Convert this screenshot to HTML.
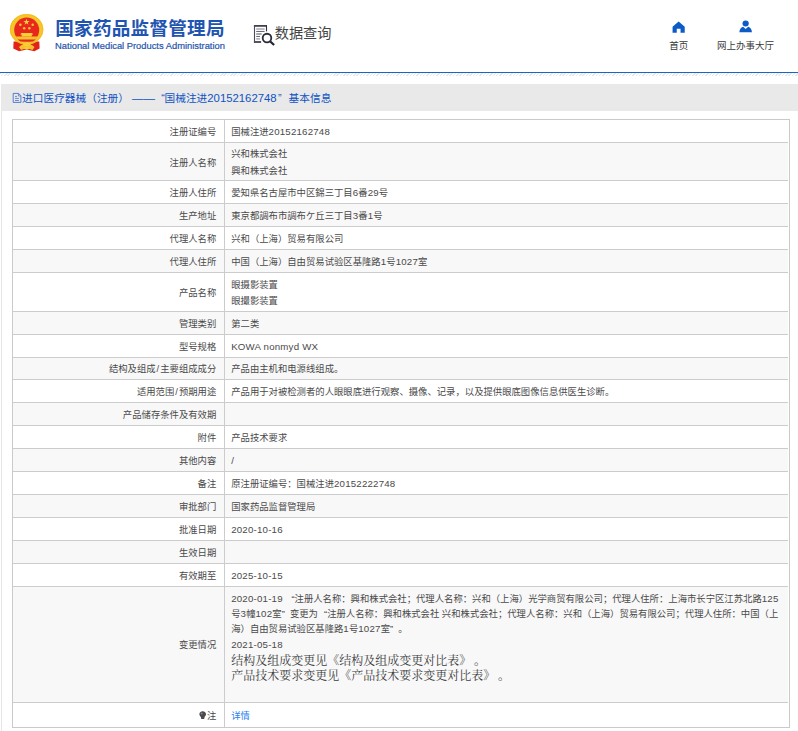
<!DOCTYPE html>
<html lang="zh-CN">
<head>
<meta charset="utf-8">
<title>国家药品监督管理局 数据查询</title>
<style>
html,body{margin:0;padding:0;background:#fff;}
body{width:798px;height:731px;overflow:hidden;position:relative;
  font-family:"Liberation Sans","Noto Sans CJK SC",sans-serif;color:#4a4a4a;text-spacing-trim:space-all;}
#hdr{position:absolute;left:0;top:0;width:798px;height:72px;background:#fff;}
#emblem{position:absolute;left:8px;top:12px;width:38px;height:41px;}
#ttl{position:absolute;left:55.2px;top:14.5px;font-size:18.6px;font-weight:bold;color:#1f55b0;
  white-space:nowrap;line-height:28px;letter-spacing:0.25px;}
#ttl2{position:absolute;left:55.1px;top:40.4px;font-size:9.36px;color:#2555ad;white-space:nowrap;line-height:12px;-webkit-text-stroke:0.2px #2555ad;}
#sico{position:absolute;left:250px;top:20px;width:30px;height:30px;}
#stx{position:absolute;left:274.7px;top:23.1px;font-size:14.2px;color:#444;white-space:nowrap;line-height:20px;}
.nav{position:absolute;top:40px;font-size:9.5px;color:#3a3a3a;white-space:nowrap;line-height:12px;text-align:center;}
.nico{position:absolute;}
#bl{position:absolute;left:0;top:71.9px;width:798px;height:1.3px;background:#1467c8;}
#hatch{position:absolute;left:0;top:73.4px;width:798px;height:3px;
  background:repeating-linear-gradient(135deg,#e4e4e4 0,#e4e4e4 1px,#fff 1px,#fff 2.35px);opacity:.85;}
#box{position:absolute;left:0.8px;top:83.8px;width:900px;height:700px;border-left:1px solid #e6e6e6;}
#bar{position:absolute;left:1px;top:83.8px;width:800px;height:27px;background:#e9e9e9;}
#bartx{position:absolute;left:22.1px;top:89.2px;font-size:10.7px;color:#0f52c4;white-space:nowrap;line-height:18px;}
#bartx .d{font-size:11.33px;}
#bartx .ds{font-size:11.5px;}
.blq{padding-left:6.3px;margin-right:-0.3px}
.brq{padding-left:1.5px;padding-right:6.95px;}
#bico{position:absolute;left:12px;top:92px;width:10px;height:12px;}
.lq{padding-left:.65em;}
.rq{padding-right:.55em;}
table{position:absolute;left:11.8px;top:118.7px;width:778.2px;border:1px solid #cacaca;
  border-collapse:separate;border-spacing:0;padding:0 0.8px 0 0;table-layout:fixed;font-size:9.35px;line-height:15.34px;}
td{padding:3px 0 0 0;box-sizing:border-box;vertical-align:middle;border-bottom:1px solid #cccccc;white-space:nowrap;overflow:hidden;}
td.l{width:212.1px;text-align:right;padding-right:7.6px;border-right:1px solid #cccccc;}
td.v{padding-left:6.3px;text-align:left;}
tr.s td{height:23px;}
tr.d td{height:38px;line-height:16.2px;}
tr.b td{height:116px;}
tr.g td{background:#f8f8f8;}
tr.last td{border-bottom:0;height:24px;}
.n{font-size:9.7px;letter-spacing:0.2px;line-height:0;position:relative;top:0px;}
td.big{vertical-align:top;padding-top:5px;}
td.big div{height:15.34px;line-height:15.34px;}
td.big div.sf{font-family:"Liberation Serif","Noto Serif CJK SC",serif;font-size:12px;color:#3c3c3c;height:14.8px;line-height:14.8px;position:relative;top:0.9px;}
a{color:#2a7ff0;text-decoration:none;}
.sl{padding:0 1px;}
.bulb{width:7.4px;height:8.3px;vertical-align:-0.9px;margin-right:0.3px;}
</style>
</head>
<body>
<div id="hdr">
<svg id="emblem" viewBox="0 0 38 41">
  <path d="M5.6 29.6 L5.3 36.6 L11 39.2 L18.7 37.4 L26.4 39.2 L31.6 36.6 L31.3 29.6 Z" fill="#e2231a"/>
  <ellipse cx="18.6" cy="17.4" rx="16.7" ry="15.3" fill="#f7c62b"/>
  <ellipse cx="18.6" cy="17.4" rx="16.3" ry="14.9" fill="none" stroke="#f2b91e" stroke-width="0.8"/>
  <circle cx="18.7" cy="18" r="12.5" fill="#e8281c"/>
  <path d="M7.5 24.6 H29.9 A12.5 12.5 0 0 1 24 29.4 H13.4 A12.5 12.5 0 0 1 7.5 24.6Z" fill="#f7c52b"/>
  <path d="M9.5 27.4 H27.9 L25 29.6 H12.4Z" fill="#e8281c"/>
  <path d="M13.3 21 H24.1 L25.2 22.6 H23.8 V24.6 H13.6 V22.6 H12.2Z" fill="#f8cf3a"/>
  <polygon points="18.5,6.7 19.25,8.97 21.64,8.98 19.71,10.39 20.44,12.67 18.5,11.27 16.56,12.67 17.29,10.39 15.36,8.98 17.75,8.97" fill="#f8d23c"/>
  <circle cx="12.4" cy="12.7" r="1.25" fill="#f4c534"/>
  <circle cx="24.7" cy="12.7" r="1.25" fill="#f4c534"/>
  <circle cx="16.2" cy="16.2" r="1.25" fill="#f4c534"/>
  <circle cx="21.3" cy="16.2" r="1.25" fill="#f4c534"/>
  <path d="M11 35 Q14.5 31.5 18.7 31.5 Q23 31.5 26.5 35 L24.5 38 Q18.7 35.5 13 38Z" fill="#f3c12c"/>
  <ellipse cx="18.7" cy="32.2" rx="3.6" ry="2.3" fill="#f7cc34"/>
  <ellipse cx="18.7" cy="36.3" rx="2.6" ry="1.3" fill="#f7cc34"/>
</svg>
<div id="ttl">国家药品监督管理局</div>
<div id="ttl2">National Medical Products Administration</div>
<svg id="sico" viewBox="250 20 30 30">
  <path d="M253.9 25.9 H267" stroke="#2b2b3c" stroke-width="1.6" fill="none"/>
  <path d="M253.9 42 H261.1" stroke="#2b2b3c" stroke-width="1.6" fill="none"/>
  <path d="M254.5 25.5 V42.4" stroke="#4a4a5a" stroke-width="1.1" fill="none"/>
  <path d="M266.5 25.5 V31.4" stroke="#2f2f40" stroke-width="1.1" fill="none"/>
  <path d="M256.2 29 H264.6" stroke="#9a9aa6" stroke-width="1.3"/>
  <path d="M256.2 31.45 H264.6" stroke="#3a3a4a" stroke-width="0.8"/>
  <path d="M256.2 34 H261.7" stroke="#787886" stroke-width="1.3"/>
  <path d="M256.2 36.45 H260" stroke="#3a3a4a" stroke-width="0.8"/>
  <path d="M256.2 38.9 H260" stroke="#9a9aa6" stroke-width="1.3"/>
  <circle cx="267" cy="38.05" r="4.3" fill="#fff" stroke="#2b2b3c" stroke-width="1.8"/>
  <path d="M270.3 41.5 L274.1 45" stroke="#23233a" stroke-width="2.3"/>
</svg>
<div id="stx">数据查询</div>
<svg class="nico" style="left:672.3px;top:20.6px;width:13.3px;height:12.3px" viewBox="0 0 14 13" preserveAspectRatio="none">
  <path d="M7 0.4 L13.4 6 V12.4 H9 V8.3 H5 V12.4 H0.6 V6 Z" fill="#0d5bc6"/>
</svg>
<div class="nav" style="left:669.3px;">首页</div>
<svg class="nico" style="left:739.4px;top:20.3px;width:13.3px;height:13px" viewBox="0 0 14 14" preserveAspectRatio="none">
  <circle cx="7" cy="3.8" r="3.3" fill="#0d5bc6"/>
  <path d="M0.4 13.3 Q0.6 8.6 4.3 7.4 L7 9.6 L9.7 7.4 Q13.4 8.6 13.6 13.3Z" fill="#0d5bc6"/>
</svg>
<div class="nav" style="left:717.1px;">网上办事大厅</div>
</div>
<div id="bl"></div>
<div id="hatch"></div>
<div id="box"></div>
<div id="bar"></div>
<svg id="bico" viewBox="12 92 10 12">
  <path d="M13.2 93.4 H18.6 L20.9 95.8 V102.4 H13.2Z" fill="none" stroke="#3a68cc" stroke-width="0.85"/>
  <path d="M18.4 93.6 V96 H20.7" fill="none" stroke="#3a68cc" stroke-width="0.7"/>
  <path d="M15 96.4 H17 M15 98.4 H18.9 M15 100.5 H18.9" stroke="#3a68cc" stroke-width="0.75"/>
</svg>
<div id="bartx">进口医疗器械（注册） <span class="ds">——</span><span class="blq">“</span>国械注进<span class="d">20152162748</span><span class="brq">”</span>基本信息</div>
<table>
<tr class="s"><td class="l">注册证编号</td><td class="v">国械注进<span class="n">20152162748</span></td></tr>
<tr class="d g"><td class="l">注册人名称</td><td class="v">兴和株式会社<br>興和株式会社</td></tr>
<tr class="s"><td class="l">注册人住所</td><td class="v">愛知県名古屋市中区錦三丁目<span class="n">6</span>番<span class="n">29</span>号</td></tr>
<tr class="s g"><td class="l">生产地址</td><td class="v">東京都調布市調布ケ丘三丁目<span class="n">3</span>番<span class="n">1</span>号</td></tr>
<tr class="s"><td class="l">代理人名称</td><td class="v">兴和（上海）贸易有限公司</td></tr>
<tr class="s g"><td class="l">代理人住所</td><td class="v">中国（上海）自由贸易试验区基隆路<span class="n">1</span>号<span class="n">1027</span>室</td></tr>
<tr class="d"><td class="l" style="height:39px">产品名称</td><td class="v" style="height:39px">眼摄影装置<br>眼撮影装置</td></tr>
<tr class="s g"><td class="l">管理类别</td><td class="v">第二类</td></tr>
<tr class="s"><td class="l">型号规格</td><td class="v"><span class="n">KOWA nonmyd WX</span></td></tr>
<tr class="s g"><td class="l" style="height:22px">结构及组成<span class="sl">/</span>主要组成成分</td><td class="v" style="height:22px">产品由主机和电源线组成。</td></tr>
<tr class="s"><td class="l">适用范围<span class="sl">/</span>预期用途</td><td class="v">产品用于对被检测者的人眼眼底进行观察、摄像、记录，以及提供眼底图像信息供医生诊断。</td></tr>
<tr class="s g"><td class="l">产品储存条件及有效期</td><td class="v"></td></tr>
<tr class="s"><td class="l">附件</td><td class="v">产品技术要求</td></tr>
<tr class="s g"><td class="l">其他内容</td><td class="v"><span class="n">/</span></td></tr>
<tr class="s"><td class="l">备注</td><td class="v">原注册证编号：国械注进<span class="n">20152222748</span></td></tr>
<tr class="s g"><td class="l">审批部门</td><td class="v">国家药品监督管理局</td></tr>
<tr class="s"><td class="l">批准日期</td><td class="v"><span class="n">2020-10-16</span></td></tr>
<tr class="s g"><td class="l">生效日期</td><td class="v"></td></tr>
<tr class="s"><td class="l">有效期至</td><td class="v"><span class="n">2025-10-15</span></td></tr>
<tr class="b g"><td class="l">变更情况</td><td class="v big"><div><span class="n">2020-01-19</span> <span class="lq">“</span>注册人名称：興和株式会社；代理人名称：兴和（上海）光学商贸有限公司；代理人住所：上海市长宁区江苏北路<span class="n">125</span></div><div>号<span class="n">3</span>幢<span class="n">102</span>室<span class="rq">”</span>变更为<span class="lq">“</span>注册人名称：興和株式会社 兴和株式会社；代理人名称：兴和（上海）贸易有限公司；代理人住所：中国（上</div><div>海）自由贸易试验区基隆路<span class="n">1</span>号<span class="n">1027</span>室<span class="rq">”</span>。</div><div><span class="n">2021-05-18</span></div><div class="sf">结构及组成变更见《结构及组成变更对比表》<span style="padding-left:2.7px">。</span></div><div class="sf">产品技术要求变更见《产品技术要求变更对比表》<span style="padding-left:2.7px">。</span></div></td></tr>
<tr class="s last"><td class="l"><svg class="bulb" viewBox="0 0 8 9"><path d="M4 0.3 C6.2 0.3 7.6 1.8 7.6 3.6 C7.6 5 6.6 5.7 6 6.6 L5.6 8.6 H2.4 L2 6.6 C1.4 5.7 0.4 5 0.4 3.6 C0.4 1.8 1.8 0.3 4 0.3Z" fill="#4a4a4e"/><circle cx="2.9" cy="2.7" r="1" fill="#8a8a90"/></svg>注</td><td class="v"><a>详情</a></td></tr>
</table>
</body>
</html>
